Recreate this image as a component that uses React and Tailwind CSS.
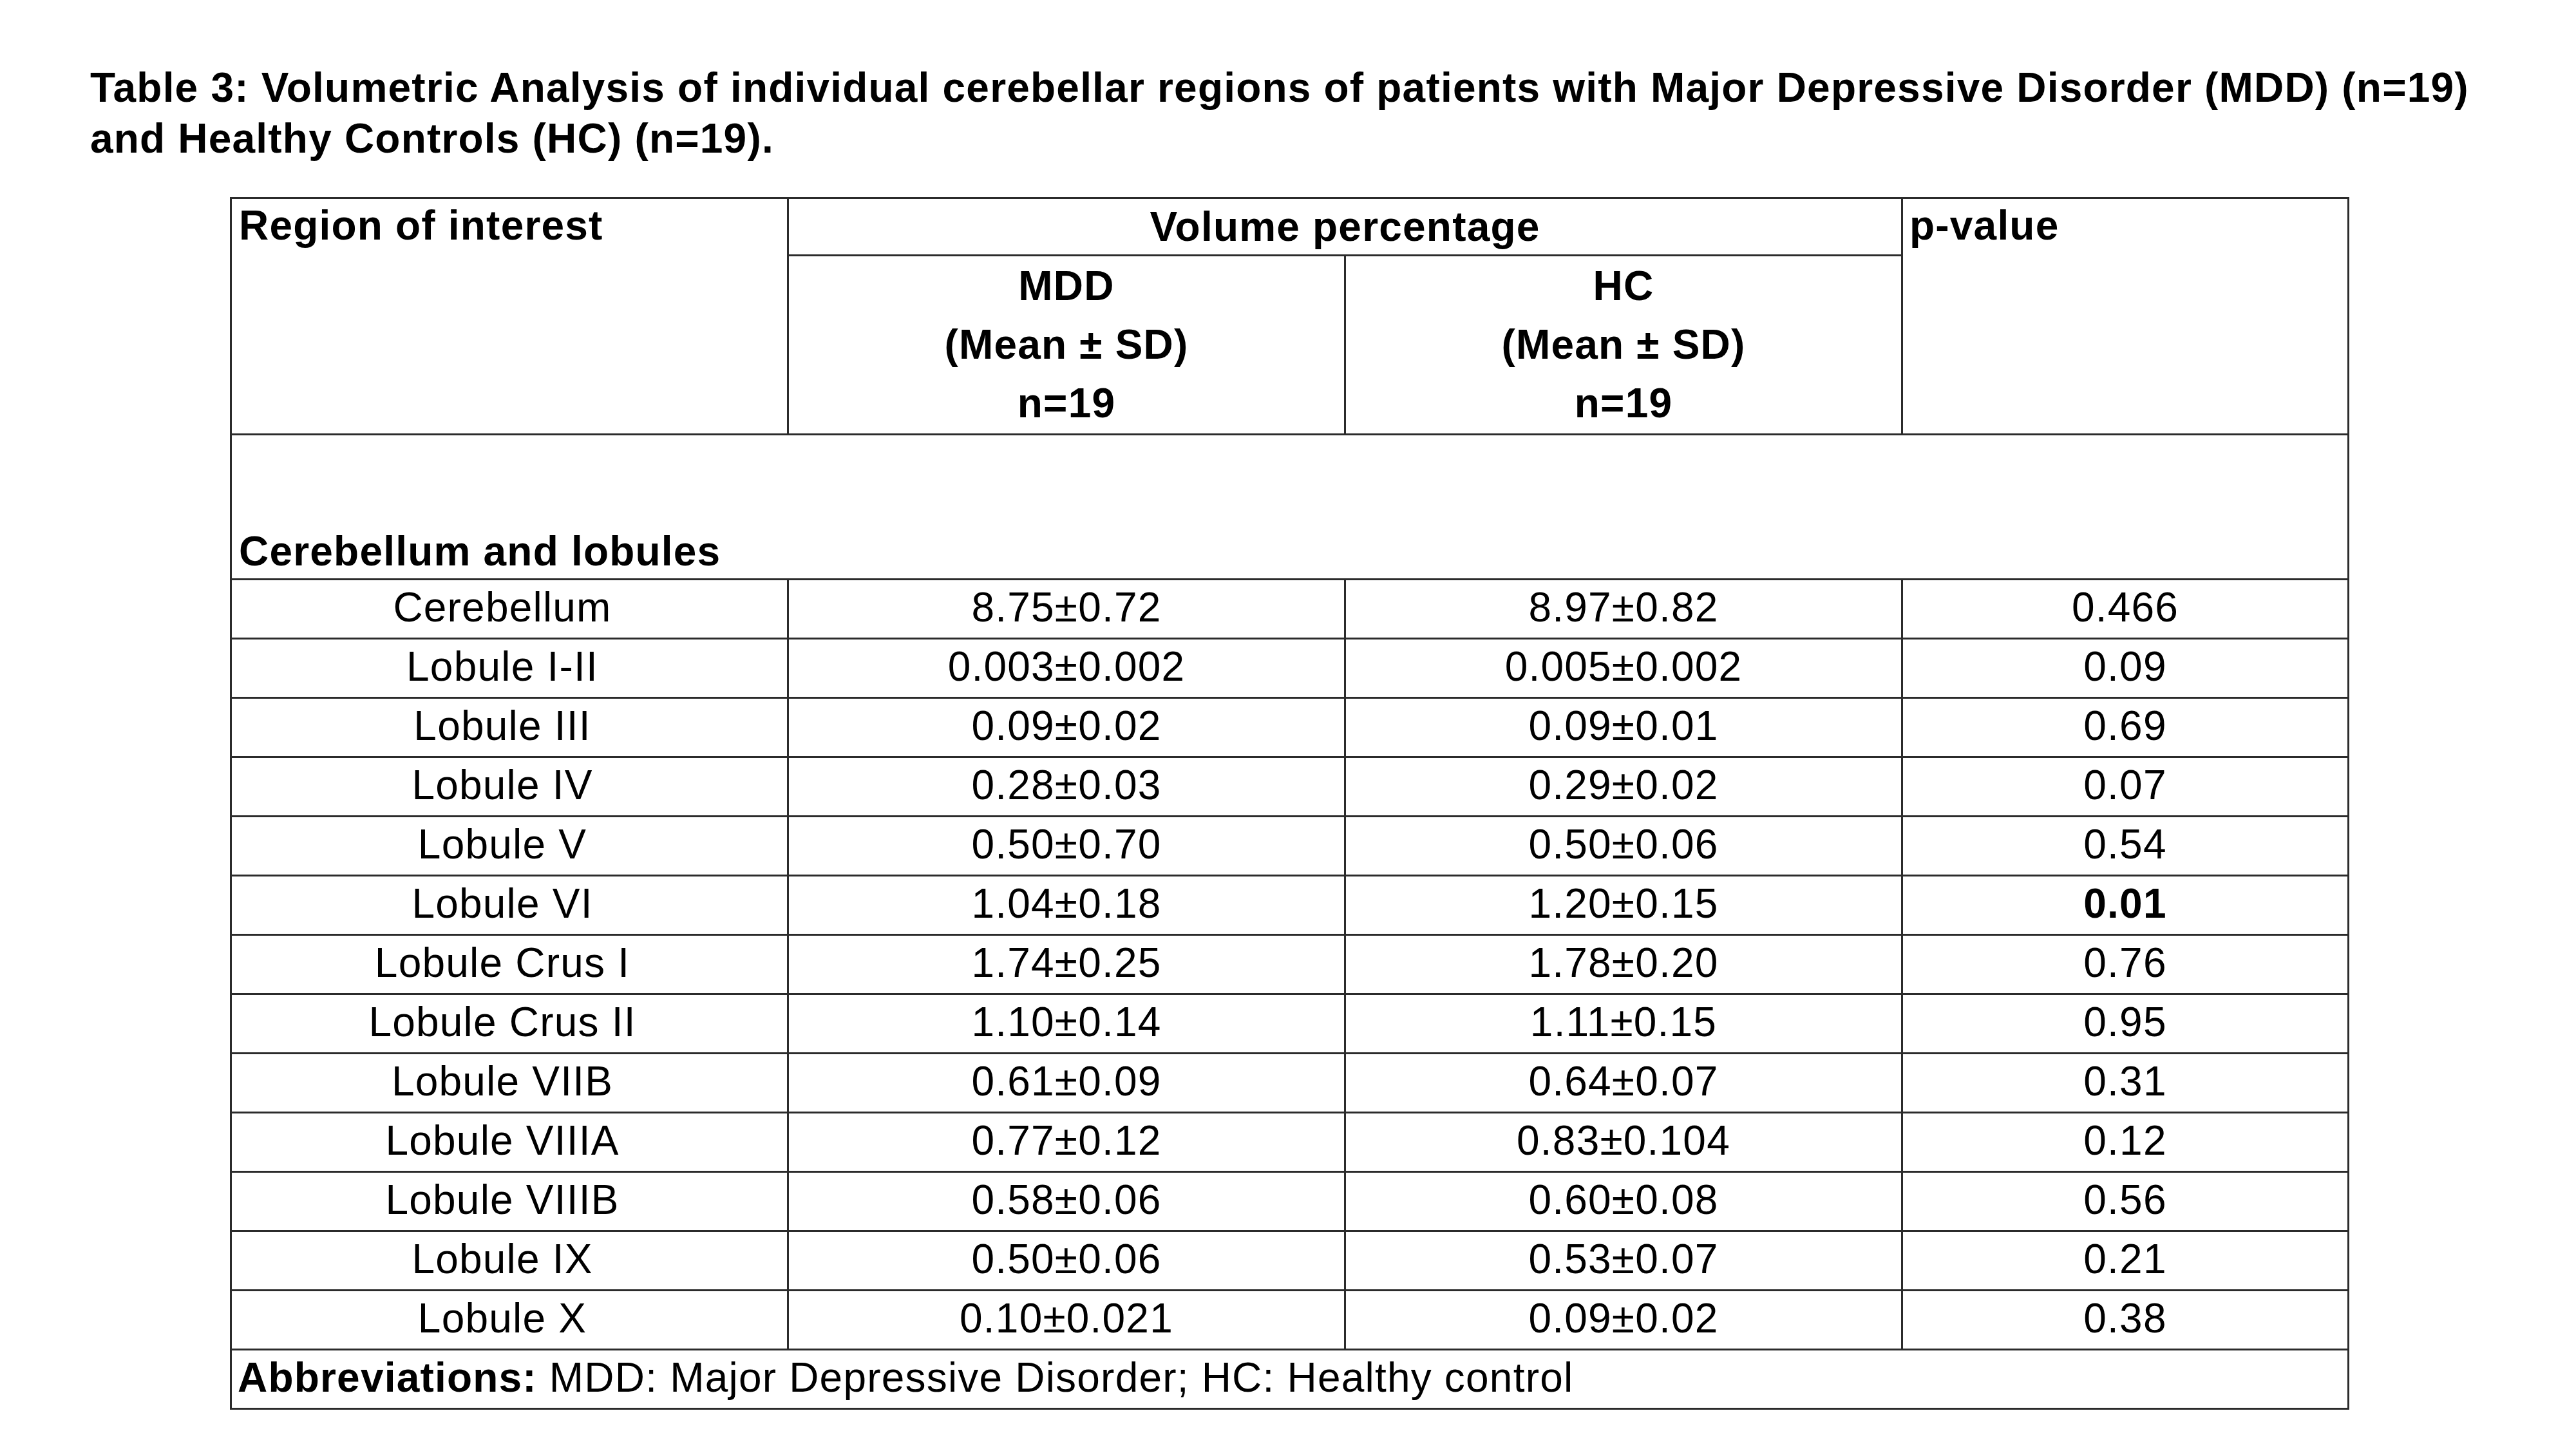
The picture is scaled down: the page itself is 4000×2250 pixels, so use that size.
const rows = [
  ["Cerebellum", "8.75±0.72", "8.97±0.82", "0.466"],
  ["Lobule I-II", "0.003±0.002", "0.005±0.002", "0.09"],
  ["Lobule III", "0.09±0.02", "0.09±0.01", "0.69"],
  ["Lobule IV", "0.28±0.03", "0.29±0.02", "0.07"],
  ["Lobule V", "0.50±0.70", "0.50±0.06", "0.54"],
  ["Lobule VI", "1.04±0.18", "1.20±0.15", "0.01", true],
  ["Lobule Crus I", "1.74±0.25", "1.78±0.20", "0.76"],
  ["Lobule Crus II", "1.10±0.14", "1.11±0.15", "0.95"],
  ["Lobule VIIB", "0.61±0.09", "0.64±0.07", "0.31"],
  ["Lobule VIIIA", "0.77±0.12", "0.83±0.104", "0.12"],
  ["Lobule VIIIB", "0.58±0.06", "0.60±0.08", "0.56"],
  ["Lobule IX", "0.50±0.06", "0.53±0.07", "0.21"],
  ["Lobule X", "0.10±0.021", "0.09±0.02", "0.38"],
];

// shared cell border
const cell = "border-[3px] border-[#2b2b2b] p-0";
const data = `${cell} pb-[6px] text-center align-middle leading-[70px]`;

export default function App() {
  return (
    <div className="min-h-screen bg-white pl-[140px] pt-[97px] text-black font-[Liberation_Sans,Arial,sans-serif] tracking-[1.2px]">
      <h1 className="whitespace-nowrap text-[64px] font-bold leading-[79px]">
        Table 3: Volumetric Analysis of individual cerebellar regions of patients with Major Depressive Disorder (MDD) (n=19)
        <br />
        and Healthy Controls (HC) (n=19).
      </h1>

      <table className="ml-[217px] mt-[51px] w-[3288px] table-fixed border-collapse text-[64px]">
        <colgroup>
          <col className="w-[865px]" />
          <col className="w-[865px]" />
          <col className="w-[865px]" />
          <col className="w-[693px]" />
        </colgroup>
        <thead>
          <tr className="h-[89px]">
            <th rowSpan={2} className={`${cell} pl-[11px] pt-[2px] text-left align-top font-bold leading-[79px]`}>
              Region of interest
            </th>
            <th colSpan={2} className={`${cell} text-center align-middle font-bold leading-[79px]`}>
              Volume percentage
            </th>
            <th rowSpan={2} className={`${cell} pl-[10px] pt-[2px] text-left align-top font-bold leading-[79px]`}>
              p-value
            </th>
          </tr>
          <tr className="h-[278px]">
            <th className={`${cell} text-center align-middle font-bold leading-[91px]`}>
              MDD
              <br />
              (Mean ± SD)
              <br />
              n=19
            </th>
            <th className={`${cell} text-center align-middle font-bold leading-[91px]`}>
              HC
              <br />
              (Mean ± SD)
              <br />
              n=19
            </th>
          </tr>
        </thead>
        <tbody>
          <tr className="h-[225px]">
            <td colSpan={4} className={`${cell} pl-[11px] pb-[2px] text-left align-bottom font-bold leading-[79px]`}>
              Cerebellum and lobules
            </td>
          </tr>
          {rows.map(([name, mdd, hc, p, bold]) => (
            <tr key={name} className="h-[92px]">
              <td className={`${data} pr-[22px]`}>{name}</td>
              <td className={data}>{mdd}</td>
              <td className={data}>{hc}</td>
              <td className={`${data} ${bold ? "font-bold" : ""}`}>{p}</td>
            </tr>
          ))}
          <tr className="h-[92px]">
            <td colSpan={4} className={`${cell} pl-[9px] pb-[6px] text-left align-middle leading-[70px]`}>
              <span className="font-bold">Abbreviations:</span> MDD: Major Depressive Disorder; HC: Healthy control
            </td>
          </tr>
        </tbody>
      </table>
    </div>
  );
}
